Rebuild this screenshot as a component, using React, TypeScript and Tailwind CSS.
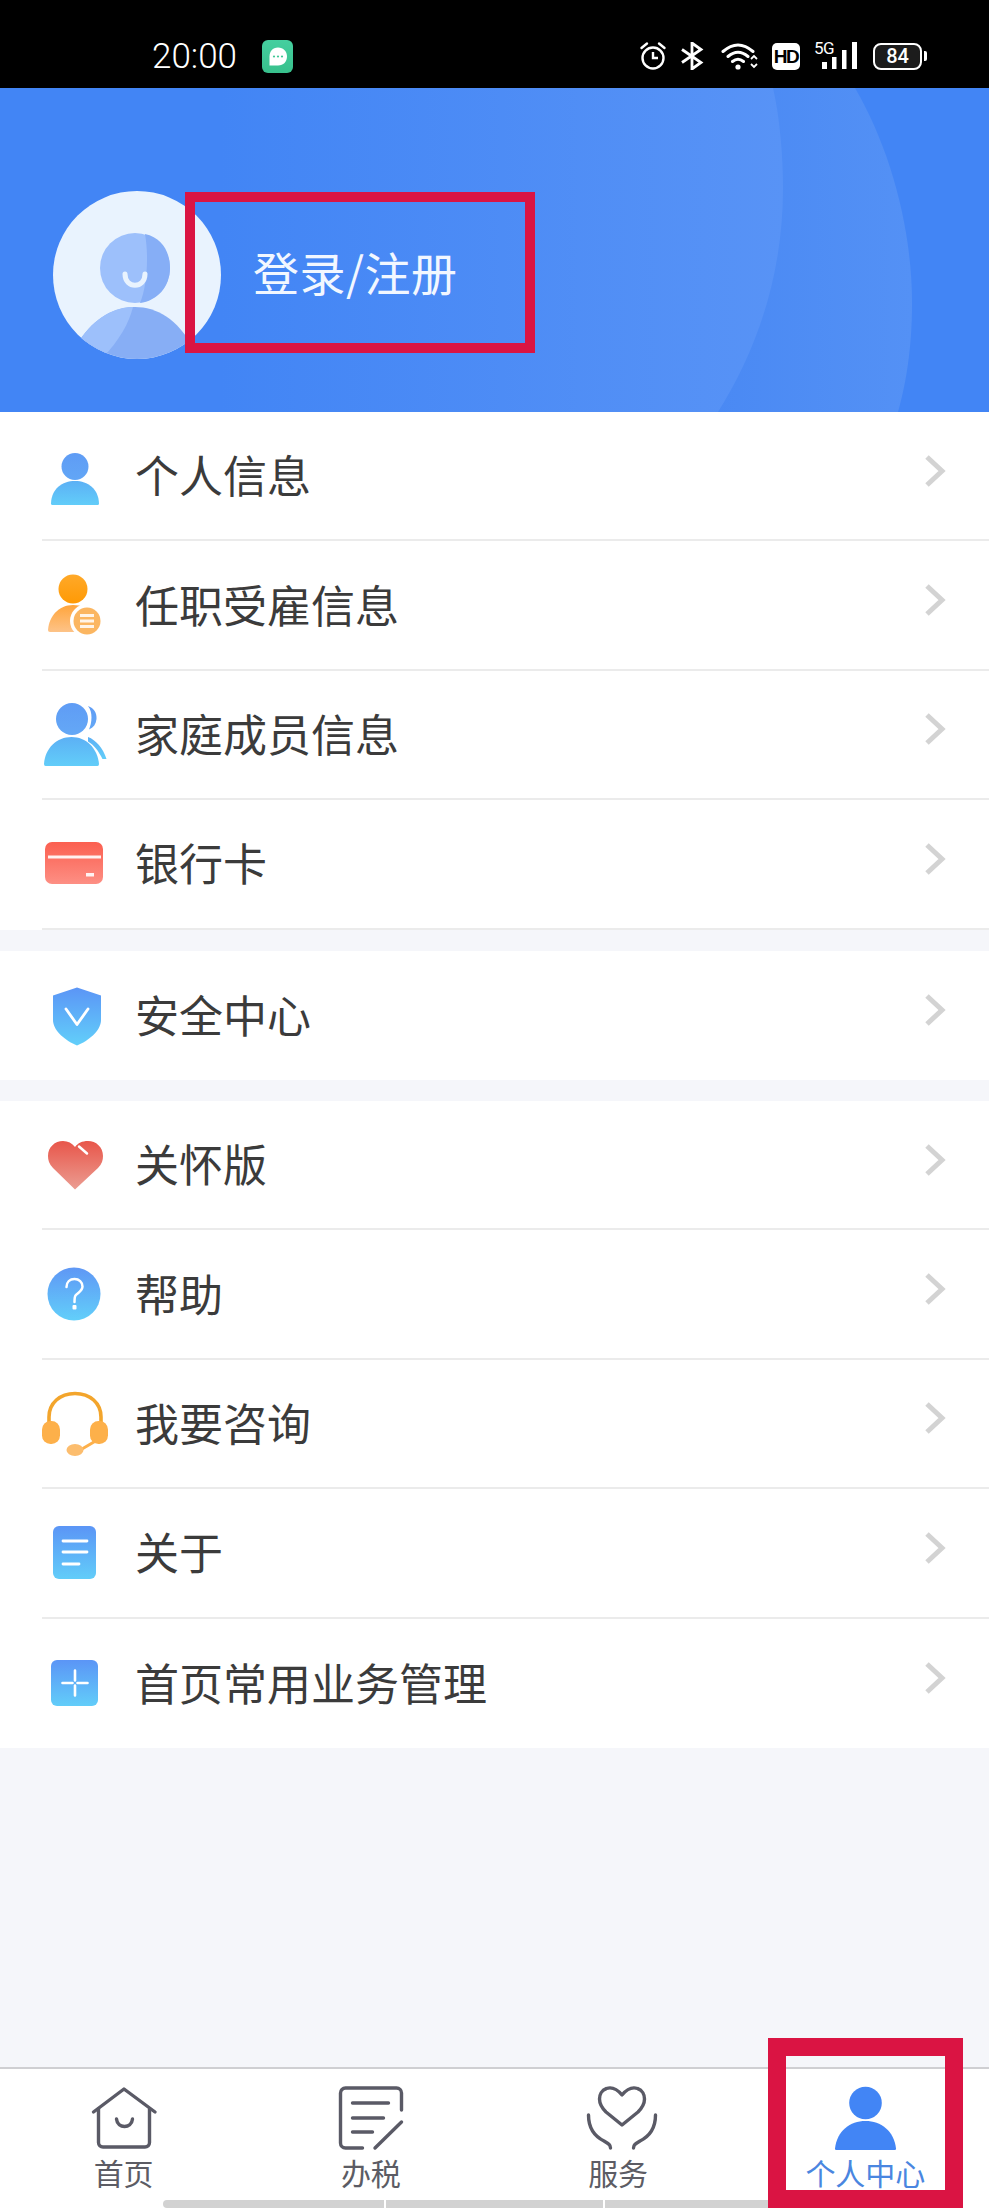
import React from "react";

const Grad = ({ id, from, to }: { id: string; from: string; to: string }) => (
  <defs>
    <linearGradient id={id} x1="0" y1="0" x2="0" y2="1">
      <stop offset="0" stopColor={from} />
      <stop offset="1" stopColor={to} />
    </linearGradient>
  </defs>
);

const Ico = ({ children }: { children: React.ReactNode }) => (
  <svg width="66" height="72" viewBox="0 0 66 72" className="shrink-0 overflow-visible">
    {children}
  </svg>
);

const IconPerson = () => (
  <Ico>
    <Grad id="p1a" from="#5f9cf5" to="#62a6f6" />
    <Grad id="p1b" from="#5cb0f5" to="#62cdf9" />
    <circle cx="33" cy="26.5" r="13.5" fill="url(#p1a)" />
    <path d="M9 63.5C9.5 49 20 41 33 41C46 41 56.5 49 57 63.5Q57 65 55.5 65H10.5Q9 65 9 63.5Z" fill="url(#p1b)" />
  </Ico>
);

const IconJob = () => (
  <Ico>
    <Grad id="p2a" from="#ffa929" to="#ff9a05" />
    <Grad id="p2b" from="#ffa53c" to="#fdc388" />
    <circle cx="31" cy="20" r="14.5" fill="url(#p2a)" />
    <path d="M6 61C7 47 17 36 31 36C39 36 46 39 50 44L50 63H8Q6 63 6 61Z" fill="url(#p2b)" />
    <circle cx="45" cy="52" r="17" fill="#fff" />
    <circle cx="45" cy="52" r="13.5" fill="#fbb661" />
    <path d="M38 46.5H52M38 52H52M38 57.5H52" stroke="#fff" strokeWidth="3" strokeOpacity="0.85" />
  </Ico>
);

const IconFamily = () => (
  <Ico>
    <Grad id="p3a" from="#5f9cf5" to="#64a8f6" />
    <Grad id="p3b" from="#5cb0f5" to="#62cdf9" />
    <path d="M46 8C52 10 55 15 54.500 21C54 26 51.500 29.500 47 31.500C50 25 51 14 46 8Z" fill="url(#p3a)" />
    <path d="M46 39C54 42 61 50 64.500 61L60.500 61C56.500 53 52 47 46 43.500Z" fill="url(#p3b)" />
    <circle cx="30" cy="21" r="16" fill="url(#p3a)" />
    <path d="M2 66C3 50 15 39 29.500 39C44 39 55.500 50 57 66Q57 68 55.500 68H3.500Q2 68 2 66Z" fill="url(#p3b)" />
  </Ico>
);

const IconCard = () => (
  <Ico>
    <Grad id="p4" from="#fb5f50" to="#fd8f84" />
    <rect x="3" y="14" width="58" height="42" rx="7" fill="url(#p4)" />
    <rect x="6" y="27.500" width="53" height="3" fill="#fff" fillOpacity="0.9" />
    <rect x="44" y="45" width="8" height="3.500" fill="#fff" fillOpacity="0.9" />
  </Ico>
);

const IconShield = () => (
  <Ico>
    <Grad id="p5" from="#5b95f6" to="#62cffa" />
    <path d="M35 8.500L59 16.500V41C59 52 46 62 35 66.500C24 62 11 52 11 41V16.500Z" fill="url(#p5)" />
    <path d="M24 30L35 45.500L46 30" fill="none" stroke="#fff" strokeWidth="2.800" strokeLinecap="round" strokeLinejoin="round" />
  </Ico>
);

const IconHeart = () => (
  <Ico>
    <Grad id="p6" from="#e8564a" to="#eb9d92" />
    <path d="M33 60.500L11 39C7 35 6 31 6 27C6 18 13 12 21 12C26 12 30 14 33 18C36 14 40 12 46 12C54 12 61 18 61 27C61 31 60 35 56 39Z" fill="url(#p6)" />
    <path d="M37 17.500L45 24.500" stroke="#fff" strokeWidth="2.500" strokeLinecap="round" />
  </Ico>
);

const IconHelp = () => (
  <Ico>
    <Grad id="p7" from="#5f97f5" to="#62cffa" />
    <circle cx="32" cy="36" r="26.500" fill="url(#p7)" />
    <path d="M24.500 29C24.500 24 28 21 32.500 21C37 21 40.500 24 40.500 28.500C40.500 33 36 34.500 33.500 37.500C32.500 39 32.500 41 32.500 44" fill="none" stroke="#fff" strokeWidth="2.500" strokeLinecap="round" />
    <rect x="30.500" y="47" width="4" height="4.500" rx="1" fill="#fff" />
  </Ico>
);

const IconHeadset = () => (
  <Ico>
    <path d="M7 38V30C7 16 18 6.500 33 6.500C48 6.500 59 16 59 30V38" fill="none" stroke="#f3a52c" strokeWidth="3.600" />
    <rect x="0" y="34" width="18" height="23" rx="8.500" fill="#fdb04a" />
    <rect x="48" y="34" width="18" height="23" rx="8.500" fill="#fdb04a" />
    <path d="M40 62L57 52" stroke="#fdb04a" strokeWidth="3" />
    <ellipse cx="33" cy="63" rx="8.500" ry="6" fill="#fcbd6e" />
  </Ico>
);

const IconDoc = () => (
  <Ico>
    <Grad id="p9" from="#5b95f6" to="#62cdf9" />
    <rect x="11" y="9" width="43" height="53" rx="6" fill="url(#p9)" />
    <path d="M21 24H45M21 35H45M21 47H37" stroke="#fff" strokeWidth="2.800" strokeLinecap="round" fill="none" />
  </Ico>
);

const IconPlus = () => (
  <Ico>
    <Grad id="p10" from="#5b95f6" to="#62cdf9" />
    <rect x="9" y="13" width="47" height="46" rx="6" fill="url(#p10)" />
    <path d="M33 23.500V33.500M33 38.500V48.500M20.500 36H30.500M35.500 36H45.500" stroke="#fff" strokeWidth="2.600" strokeLinecap="round" fill="none" />
  </Ico>
);

const Chevron = () => (
  <svg width="24" height="34" viewBox="0 0 24 34" className="mr-[43px] mb-[10px] ml-auto shrink-0">
    <path d="M5 3L20 17L5 31" fill="none" stroke="#d3d3d3" strokeWidth="5" />
  </svg>
);

const Row = ({ icon, label, divider }: { icon: React.ReactNode; label: string; divider?: boolean }) => (
  <div className={`ml-[42px] flex h-[129.4px] items-center ${divider ? "border-b-2 border-[#ebebeb]" : ""}`}>
    {icon}
    <span className="mb-[3px] ml-[27px] text-[44px] leading-none text-[#3b3b3b]">{label}</span>
    <Chevron />
  </div>
);

const TabLabel = ({ text, active }: { text: string; active?: boolean }) => (
  <span className={`mt-[3px] text-[30px] leading-[36px] ${active ? "text-[#4a86e0]" : "text-[#5c5c64]"}`}>{text}</span>
);

const tabStroke = { fill: "none", stroke: "#5a5a66", strokeWidth: 3.4, strokeLinecap: "round", strokeLinejoin: "round" } as const;

export default function App() {
  return (
    <div className="relative flex h-[2208px] w-[989px] flex-col overflow-hidden bg-[#f5f6fa] font-['Noto_Sans_CJK_SC',sans-serif]">
      {/* status bar */}
      <div className="flex h-[88px] shrink-0 items-center justify-between bg-black pt-[24px] pr-[62px] pl-[152px] text-white">
        <div className="flex items-center">
          <span className="font-['Roboto',sans-serif] text-[35px] leading-none font-light">20:00</span>
          <svg width="31" height="33" viewBox="0 0 31 33" className="ml-[25px]">
            <Grad id="chat" from="#45cf9f" to="#38c08c" />
            <rect width="31" height="33" rx="6" fill="url(#chat)" />
            <path d="M16 7.500C21.500 7.500 25 11.500 25 16.500C25 21.500 21.500 25.500 16 25.500H7.500V16.500C7.500 11.500 10.500 7.500 16 7.500Z" fill="#fff" />
            <circle cx="12" cy="16.500" r="1.100" fill="#3fc795" />
            <circle cx="16" cy="16.500" r="1.100" fill="#3fc795" />
            <circle cx="20" cy="16.500" r="1.100" fill="#3fc795" />
          </svg>
        </div>
        <div className="flex items-center">
          <svg width="28" height="30" viewBox="0 0 28 30">
            <circle cx="14" cy="17" r="10.500" fill="none" stroke="#fff" strokeWidth="2.400" />
            <path d="M14 11V17H19" fill="none" stroke="#fff" strokeWidth="2.400" />
            <path d="M2.500 7L8 2.500M25.500 7L20 2.500" stroke="#fff" strokeWidth="2.400" strokeLinecap="round" />
          </svg>
          <svg width="24" height="28" viewBox="0 0 24 28" className="ml-[13px]">
            <path d="M2 7.500L21 20.500L12 27V1L21 7.500L2 20.500" fill="none" stroke="#fff" strokeWidth="2.800" />
          </svg>
          <svg width="38" height="28" viewBox="0 0 38 28" className="ml-[17px]">
            <path d="M2 9.500Q17 -3.500 32 9.500M7 14.500Q17 6 27 14.500M11.500 19.500Q17 15 22.500 19.500" fill="none" stroke="#fff" strokeWidth="3" strokeLinecap="round" />
            <circle cx="17" cy="25" r="2.600" fill="#fff" />
            <path d="M30 17L33 14L36 17M30 22L33 25L36 22" fill="none" stroke="#fff" strokeWidth="1.800" />
          </svg>
          <div className="ml-[13px] flex h-[27px] w-[28px] items-center justify-center rounded-[5px] bg-white font-['Liberation_Sans',sans-serif] text-[19px] leading-none font-bold tracking-[-1.5px] text-black">
            HD
          </div>
          <div className="relative ml-[17px] h-[28px] w-[40px]">
            <span className="absolute top-[-2px] left-[-3px] font-['Roboto',sans-serif] text-[17px] leading-[17px] tracking-[-0.5px] text-white">5G</span>
            <svg width="40" height="28" viewBox="0 0 40 28" className="absolute top-0 left-0">
              <rect x="5" y="20" width="5" height="7" fill="#fff" />
              <rect x="15" y="15" width="4.500" height="12" fill="#fff" />
              <rect x="25" y="8" width="4.500" height="19" fill="#fff" />
              <rect x="35" y="0" width="5" height="27" fill="#fff" />
            </svg>
          </div>
          <div className="ml-[16px] flex items-center">
            <div className="flex h-[27px] w-[49px] items-center justify-center rounded-[8px] border-[2.500px] border-white bg-[#1c1c1c] font-['Roboto',sans-serif] text-[20px] leading-none font-medium text-white">
              84
            </div>
            <div className="ml-[2px] h-[10px] w-[3px] rounded-r-[2px] bg-white" />
          </div>
        </div>
      </div>

      {/* header */}
      <div className="relative flex h-[324px] shrink-0 items-center bg-[#4285f5] pt-[49px] pl-[53px]">
        <svg width="989" height="324" viewBox="0 0 989 324" className="absolute top-0 left-0">
          <defs>
            <linearGradient id="sw1" x1="0" y1="0" x2="1" y2="0">
              <stop offset="0" stopColor="#4285f5" />
              <stop offset="1" stopColor="#5893f6" />
            </linearGradient>
            <linearGradient id="sw2" x1="0" y1="0" x2="1" y2="0">
              <stop offset="0" stopColor="#4686f3" />
              <stop offset="1" stopColor="#5491f5" />
            </linearGradient>
          </defs>
          <path d="M700 0H855C890 60 912 140 912 215C912 260 906 295 898 324H640Z" fill="url(#sw2)" />
          <path d="M220 0H773C780 30 783 70 783 100C783 190 755 265 718 324H220Z" fill="url(#sw1)" />
        </svg>
        <svg width="168" height="168" viewBox="0 0 168 168" className="relative shrink-0">
          <defs>
            <clipPath id="av">
              <circle cx="84" cy="84" r="84" />
            </clipPath>
          </defs>
          <circle cx="84" cy="84" r="84" fill="#e9f3fe" />
          <circle cx="82" cy="77" r="35" fill="#9dc0fb" />
          <path d="M92 43C110 47 117 62 117 77C117 96 104 110 87 112C94 96 96 65 92 43Z" fill="#86aef6" />
          <path d="M72 83C72 98 92 98 92 83" fill="none" stroke="#e9f3fe" strokeWidth="5" strokeLinecap="round" />
          <g clipPath="url(#av)">
            <path d="M26 150C42 126 62 116 82 116C104 116 124 128 140 156L140 170H26Z" fill="#87aef5" />
            <path d="M26 150C42 126 62 116 80 116C76 132 66 150 50 166L26 170Z" fill="#9dc0fb" />
          </g>
        </svg>
        <span className="relative mb-[8px] ml-[32px] text-[46px] leading-none tracking-[0.5px] text-[#f2f7ff]">登录/注册</span>
      </div>

      {/* lists */}
      <div className="flex-1">
        <div className="bg-white">
          <Row icon={<IconPerson />} label="个人信息" divider />
          <Row icon={<IconJob />} label="任职受雇信息" divider />
          <Row icon={<IconFamily />} label="家庭成员信息" divider />
          <Row icon={<IconCard />} label="银行卡" divider />
        </div>
        <div className="mt-[21px] bg-white">
          <Row icon={<IconShield />} label="安全中心" />
        </div>
        <div className="mt-[21px] bg-white">
          <Row icon={<IconHeart />} label="关怀版" divider />
          <Row icon={<IconHelp />} label="帮助" divider />
          <Row icon={<IconHeadset />} label="我要咨询" divider />
          <Row icon={<IconDoc />} label="关于" divider />
          <Row icon={<IconPlus />} label="首页常用业务管理" />
        </div>
      </div>

      {/* tab bar */}
      <div className="h-[141px] shrink-0 border-t-2 border-[#cfcfd2] bg-white">
        <div className="grid h-[131px] grid-cols-4 pt-[14px]">
          <div className="flex flex-col items-center">
            <svg width="80" height="68" viewBox="0 0 80 68">
              <path d="M9.500 29L40 6L71 29" {...tabStroke} />
              <path d="M14.500 26V59.500a4.500 4.500 0 0 0 4.500 4.500H61a4.500 4.500 0 0 0 4.500 -4.500V26" {...tabStroke} />
              <path d="M32.500 36C33.500 46 47.500 46 48.500 36" {...tabStroke} />
            </svg>
            <TabLabel text="首页" />
          </div>
          <div className="flex flex-col items-center">
            <svg width="80" height="68" viewBox="0 0 80 68">
              <path d="M70.500 27V10a5 5 0 0 0 -5 -5H14.500a5 5 0 0 0 -5 5V60a5 5 0 0 0 5 5H31.500" {...tabStroke} />
              <path d="M21.500 20H57.500M21.500 35H52.500M21.500 49H41.500M70.500 39L44 65" {...tabStroke} />
            </svg>
            <TabLabel text="办税" />
          </div>
          <div className="flex flex-col items-center">
            <svg width="88" height="68" viewBox="-4 0 88 68">
              <path d="M44 12C39 6 33 4 28.500 5.500C23.500 7 21.500 12 21.500 16C21.500 21 24 25 28 29L44 42L60 29C64 25 66.500 21 66.500 16C66.500 12 64.500 7 59.500 5.500C55 4 49 6 44 12Z" {...tabStroke} />
              <path d="M10.500 32C10.500 48 20 55 26 58C31 61 32.500 62 32.500 65M77.500 32C77.500 48 68 55 62 58C57 61 55.500 62 55.500 65" {...tabStroke} />
            </svg>
            <TabLabel text="服务" />
          </div>
          <div className="flex flex-col items-center">
            <svg width="80" height="68" viewBox="0 0 80 68">
              <circle cx="40.500" cy="20" r="16.300" fill="#4285f5" />
              <path d="M10 65.500C12 48 25 38 40.500 38C56 38 69 48 71 65.500Q71 67 70 67H11Q10 67 10 65.500Z" fill="#4285f5" />
            </svg>
            <TabLabel text="个人中心" active />
          </div>
        </div>
        <div className="ml-[163px] flex h-[8px] gap-[2px]">
          <div className="w-[221px] rounded-l-[8px] bg-[#d2d2d2]" />
          <div className="w-[217px] bg-[#d2d2d2]" />
          <div className="w-[221px] rounded-r-[8px] bg-[#d2d2d2]" />
        </div>
      </div>

      {/* annotation boxes */}
      <div className="absolute top-[192px] left-[185px] h-[161px] w-[350px] border-[10px] border-[#da1443]" />
      <div className="absolute top-[2038px] left-[768px] h-[170px] w-[195px] border-[18px] border-[#da1443]" />
    </div>
  );
}
